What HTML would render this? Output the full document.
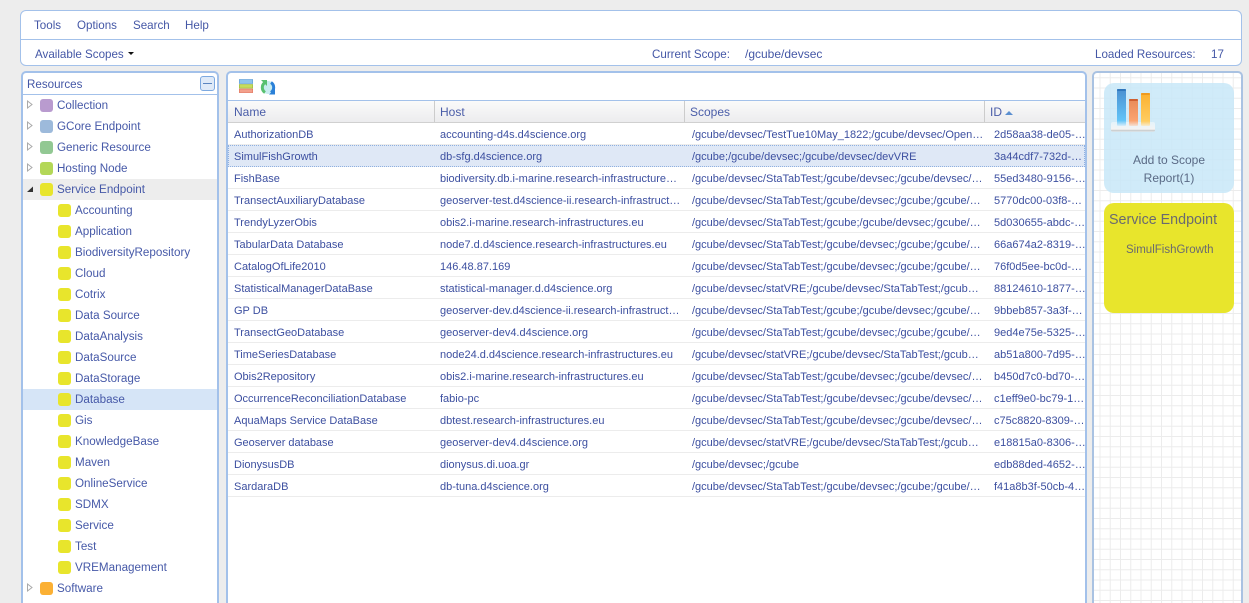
<!DOCTYPE html>
<html>
<head>
<meta charset="utf-8">
<style>
html,body{margin:0;padding:0;width:1249px;height:603px;overflow:hidden;background:#ededed;font-family:"Liberation Sans",sans-serif;color:#3f51a5}
div,span{position:absolute;box-sizing:border-box;white-space:nowrap}
.t{font-size:11.6px;line-height:14px;color:#4457a6}
.panel{background:#fff;border:1px solid #a3c1ea}
.node{left:23px;width:194px;height:21px}
.sw{width:13px;height:13px;border-radius:3px;top:4px;background:#e8e52c}
.lbl{font-size:11.65px;line-height:21px;top:0;color:#4659a8}
.tw{position:absolute;left:2px;top:4px;width:9px;height:11px}
.row{left:228px;width:857px;height:22px;border-bottom:1px solid #ececec}
.c{top:1px;line-height:22px;font-size:11px;color:#3c4fa0}
.c1{left:6px}.c2{left:212px}.c3{left:464px}.c4{left:766px}
.h{top:0;height:22px;line-height:23px;font-size:12px;color:#4a5da8}
</style>
</head>
<body>
<div style="left:0;top:0;width:1249px;height:603px;overflow:hidden">
<!-- top panel -->
<div class="panel" style="left:20px;top:10px;width:1222px;height:56px;border-radius:6px"></div>
<div style="left:21px;top:39px;width:1220px;height:1px;background:#a3c1ea"></div>
<div class="t" style="left:34px;top:19px">Tools</div>
<div class="t" style="left:77px;top:19px">Options</div>
<div class="t" style="left:133px;top:19px">Search</div>
<div class="t" style="left:185px;top:19px">Help</div>
<div class="t" style="left:35px;top:48px">Available Scopes</div>
<div style="left:128px;top:52px;width:0;height:0;border-top:3px solid #111;border-left:3px solid transparent;border-right:3px solid transparent"></div>
<div class="t" style="left:652px;top:48px">Current Scope:</div>
<div class="t" style="left:745px;top:47px;font-size:12px">/gcube/devsec</div>
<div class="t" style="left:1095px;top:48px">Loaded Resources:</div>
<div class="t" style="left:1211px;top:48px">17</div>

<!-- left panel -->
<div style="left:21px;top:71px;width:198px;height:560px;background:#fff;border:2px solid #a3c1ea;border-radius:5px 5px 0 0"></div>
<div style="left:23px;top:94px;width:194px;height:1px;background:#a3c1ea"></div>
<div class="t" style="left:27px;top:78px">Resources</div>
<div style="left:200px;top:76px;width:15px;height:15px;border:1px solid #7da9e0;border-radius:3px;background:#dfeaf8"></div>
<div style="left:203px;top:83px;width:9px;height:1px;background:#5b85c0"></div>

<div class="node" style="top:95px"><svg class="tw" viewBox="0 0 9 11"><path d="M2.500 2L7 5.500L2.500 9Z" fill="#fff" stroke="#aaa"/></svg><span class="sw" style="left:17px;background:#b99bcf"></span><span class="lbl" style="left:34px">Collection</span></div>
<div class="node" style="top:116px"><svg class="tw" viewBox="0 0 9 11"><path d="M2.500 2L7 5.500L2.500 9Z" fill="#fff" stroke="#aaa"/></svg><span class="sw" style="left:17px;background:#9dbadb"></span><span class="lbl" style="left:34px">GCore Endpoint</span></div>
<div class="node" style="top:137px"><svg class="tw" viewBox="0 0 9 11"><path d="M2.500 2L7 5.500L2.500 9Z" fill="#fff" stroke="#aaa"/></svg><span class="sw" style="left:17px;background:#92c893"></span><span class="lbl" style="left:34px">Generic Resource</span></div>
<div class="node" style="top:158px"><svg class="tw" viewBox="0 0 9 11"><path d="M2.500 2L7 5.500L2.500 9Z" fill="#fff" stroke="#aaa"/></svg><span class="sw" style="left:17px;background:#b3d757"></span><span class="lbl" style="left:34px">Hosting Node</span></div>
<div class="node" style="top:179px;background:#ededed"><svg class="tw" viewBox="0 0 9 11"><path d="M2 9L8 9L8 3.500Z" fill="#333"/></svg><span class="sw" style="left:17px"></span><span class="lbl" style="left:34px">Service Endpoint</span></div>
<div class="node" style="top:200px"><span class="sw" style="left:35px"></span><span class="lbl" style="left:52px">Accounting</span></div>
<div class="node" style="top:221px"><span class="sw" style="left:35px"></span><span class="lbl" style="left:52px">Application</span></div>
<div class="node" style="top:242px"><span class="sw" style="left:35px"></span><span class="lbl" style="left:52px">BiodiversityRepository</span></div>
<div class="node" style="top:263px"><span class="sw" style="left:35px"></span><span class="lbl" style="left:52px">Cloud</span></div>
<div class="node" style="top:284px"><span class="sw" style="left:35px"></span><span class="lbl" style="left:52px">Cotrix</span></div>
<div class="node" style="top:305px"><span class="sw" style="left:35px"></span><span class="lbl" style="left:52px">Data Source</span></div>
<div class="node" style="top:326px"><span class="sw" style="left:35px"></span><span class="lbl" style="left:52px">DataAnalysis</span></div>
<div class="node" style="top:347px"><span class="sw" style="left:35px"></span><span class="lbl" style="left:52px">DataSource</span></div>
<div class="node" style="top:368px"><span class="sw" style="left:35px"></span><span class="lbl" style="left:52px">DataStorage</span></div>
<div class="node" style="top:389px;background:#d6e5f7"><span class="sw" style="left:35px"></span><span class="lbl" style="left:52px">Database</span></div>
<div class="node" style="top:410px"><span class="sw" style="left:35px"></span><span class="lbl" style="left:52px">Gis</span></div>
<div class="node" style="top:431px"><span class="sw" style="left:35px"></span><span class="lbl" style="left:52px">KnowledgeBase</span></div>
<div class="node" style="top:452px"><span class="sw" style="left:35px"></span><span class="lbl" style="left:52px">Maven</span></div>
<div class="node" style="top:473px"><span class="sw" style="left:35px"></span><span class="lbl" style="left:52px">OnlineService</span></div>
<div class="node" style="top:494px"><span class="sw" style="left:35px"></span><span class="lbl" style="left:52px">SDMX</span></div>
<div class="node" style="top:515px"><span class="sw" style="left:35px"></span><span class="lbl" style="left:52px">Service</span></div>
<div class="node" style="top:536px"><span class="sw" style="left:35px"></span><span class="lbl" style="left:52px">Test</span></div>
<div class="node" style="top:557px"><span class="sw" style="left:35px"></span><span class="lbl" style="left:52px">VREManagement</span></div>
<div class="node" style="top:578px"><svg class="tw" viewBox="0 0 9 11"><path d="M2.500 2L7 5.500L2.500 9Z" fill="#fff" stroke="#aaa"/></svg><span class="sw" style="left:17px;background:#fbb034"></span><span class="lbl" style="left:34px">Software</span></div>

<!-- center panel -->
<div style="left:226px;top:71px;width:861px;height:560px;background:#fff;border:2px solid #a3c1ea;border-radius:5px 5px 0 0"></div>
<svg style="position:absolute;left:239px;top:79px" width="37" height="16" viewBox="0 0 37 16">
<rect x=".3" y=".5" width="13.400" height="4" fill="#8ec4ee" stroke="#5a9bd5" stroke-width=".6"/>
<rect x=".3" y="5.500" width="13.400" height="3.600" fill="#c5dc5e" stroke="#9ab83a" stroke-width=".6"/>
<rect x=".3" y="10" width="13.400" height="3.600" fill="#f3a08c" stroke="#e0745c" stroke-width=".6"/>
<circle cx="29" cy="8.500" r="6.500" fill="#c8ecf0"/>
<path d="M26 3.500A6 6 0 0 0 26 13.500" fill="none" stroke="#58c070" stroke-width="3"/>
<path d="M22 1h6v6z" fill="#58c070"/>
<path d="M32 13.500A6 6 0 0 0 32 3.500" fill="none" stroke="#2a80d8" stroke-width="3"/>
<path d="M30 15.500h6v-6z" fill="#2a80d8"/>
</svg>
<div style="left:228px;top:100px;width:857px;height:1px;background:#a3c1ea"></div>
<div style="left:228px;top:101px;width:857px;height:22px;background:linear-gradient(#fafafa,#ececee);border-bottom:1px solid #d0d0d0">
<span class="h" style="left:6px">Name</span>
<span class="h" style="left:212px">Host</span>
<span class="h" style="left:462px">Scopes</span>
<span class="h" style="left:762px">ID</span>
<span style="left:777px;top:10px;width:0;height:0;border-bottom:4px solid #5b8fd0;border-left:4px solid transparent;border-right:4px solid transparent"></span>
<span style="left:206px;top:0;width:1px;height:21px;background:#ccc"></span>
<span style="left:456px;top:0;width:1px;height:21px;background:#ccc"></span>
<span style="left:756px;top:0;width:1px;height:21px;background:#ccc"></span>
</div>

<div class="row" style="top:123px"><span class="c c1">AuthorizationDB</span><span class="c c2">accounting-d4s.d4science.org</span><span class="c c3">/gcube/devsec/TestTue10May_1822;/gcube/devsec/Open…</span><span class="c c4">2d58aa38-de05-…</span></div>
<div class="row" style="top:145px;background:#dfe8f6;border:1px dotted #8fb0e0"><span class="c c1" style="left:5px;top:0">SimulFishGrowth</span><span class="c c2" style="left:211px;top:0">db-sfg.d4science.org</span><span class="c c3" style="left:463px;top:0">/gcube;/gcube/devsec;/gcube/devsec/devVRE</span><span class="c c4" style="left:765px;top:0">3a44cdf7-732d-…</span></div>
<div class="row" style="top:167px"><span class="c c1">FishBase</span><span class="c c2">biodiversity.db.i-marine.research-infrastructure…</span><span class="c c3">/gcube/devsec/StaTabTest;/gcube/devsec;/gcube/devsec/…</span><span class="c c4">55ed3480-9156-…</span></div>
<div class="row" style="top:189px"><span class="c c1">TransectAuxiliaryDatabase</span><span class="c c2">geoserver-test.d4science-ii.research-infrastruct…</span><span class="c c3">/gcube/devsec/StaTabTest;/gcube/devsec;/gcube;/gcube/…</span><span class="c c4">5770dc00-03f8-…</span></div>
<div class="row" style="top:211px"><span class="c c1">TrendyLyzerObis</span><span class="c c2">obis2.i-marine.research-infrastructures.eu</span><span class="c c3">/gcube/devsec/StaTabTest;/gcube;/gcube/devsec;/gcube/…</span><span class="c c4">5d030655-abdc-…</span></div>
<div class="row" style="top:233px"><span class="c c1">TabularData Database</span><span class="c c2">node7.d.d4science.research-infrastructures.eu</span><span class="c c3">/gcube/devsec/StaTabTest;/gcube/devsec;/gcube;/gcube/…</span><span class="c c4">66a674a2-8319-…</span></div>
<div class="row" style="top:255px"><span class="c c1">CatalogOfLife2010</span><span class="c c2">146.48.87.169</span><span class="c c3">/gcube/devsec/StaTabTest;/gcube/devsec;/gcube;/gcube/…</span><span class="c c4">76f0d5ee-bc0d-…</span></div>
<div class="row" style="top:277px"><span class="c c1">StatisticalManagerDataBase</span><span class="c c2">statistical-manager.d.d4science.org</span><span class="c c3">/gcube/devsec/statVRE;/gcube/devsec/StaTabTest;/gcub…</span><span class="c c4">88124610-1877-…</span></div>
<div class="row" style="top:299px"><span class="c c1">GP DB</span><span class="c c2">geoserver-dev.d4science-ii.research-infrastruct…</span><span class="c c3">/gcube/devsec/StaTabTest;/gcube;/gcube/devsec;/gcube/…</span><span class="c c4">9bbeb857-3a3f-…</span></div>
<div class="row" style="top:321px"><span class="c c1">TransectGeoDatabase</span><span class="c c2">geoserver-dev4.d4science.org</span><span class="c c3">/gcube/devsec/StaTabTest;/gcube/devsec;/gcube;/gcube/…</span><span class="c c4">9ed4e75e-5325-…</span></div>
<div class="row" style="top:343px"><span class="c c1">TimeSeriesDatabase</span><span class="c c2">node24.d.d4science.research-infrastructures.eu</span><span class="c c3">/gcube/devsec/statVRE;/gcube/devsec/StaTabTest;/gcub…</span><span class="c c4">ab51a800-7d95-…</span></div>
<div class="row" style="top:365px"><span class="c c1">Obis2Repository</span><span class="c c2">obis2.i-marine.research-infrastructures.eu</span><span class="c c3">/gcube/devsec/StaTabTest;/gcube/devsec;/gcube/devsec/…</span><span class="c c4">b450d7c0-bd70-…</span></div>
<div class="row" style="top:387px"><span class="c c1">OccurrenceReconciliationDatabase</span><span class="c c2">fabio-pc</span><span class="c c3">/gcube/devsec/StaTabTest;/gcube/devsec;/gcube/devsec/…</span><span class="c c4">c1eff9e0-bc79-1…</span></div>
<div class="row" style="top:409px"><span class="c c1">AquaMaps Service DataBase</span><span class="c c2">dbtest.research-infrastructures.eu</span><span class="c c3">/gcube/devsec/StaTabTest;/gcube/devsec;/gcube/devsec/…</span><span class="c c4">c75c8820-8309-…</span></div>
<div class="row" style="top:431px"><span class="c c1">Geoserver database</span><span class="c c2">geoserver-dev4.d4science.org</span><span class="c c3">/gcube/devsec/statVRE;/gcube/devsec/StaTabTest;/gcub…</span><span class="c c4">e18815a0-8306-…</span></div>
<div class="row" style="top:453px"><span class="c c1">DionysusDB</span><span class="c c2">dionysus.di.uoa.gr</span><span class="c c3">/gcube/devsec;/gcube</span><span class="c c4">edb88ded-4652-…</span></div>
<div class="row" style="top:475px"><span class="c c1">SardaraDB</span><span class="c c2">db-tuna.d4science.org</span><span class="c c3">/gcube/devsec/StaTabTest;/gcube/devsec;/gcube;/gcube/…</span><span class="c c4">f41a8b3f-50cb-4…</span></div>

<!-- right panel -->
<div style="left:1092px;top:71px;width:151px;height:560px;border:2px solid #a9c2e2;border-radius:5px 5px 0 0;background-color:#fff;background-image:linear-gradient(#ececec 1px,transparent 1px),linear-gradient(90deg,#ececec 1px,transparent 1px);background-size:10.25px 10.25px;background-position:5.500px 4.250px"></div>
<div style="left:1104px;top:83px;width:130px;height:110px;background:rgba(200,232,248,.85);border-radius:10px"></div>
<svg style="position:absolute;left:1108px;top:86px" width="52" height="52" viewBox="0 0 52 52">
<defs>
<linearGradient id="a" x1="0" y1="0" x2="0" y2="1"><stop offset="0" stop-color="#4a8fd0"/><stop offset=".85" stop-color="#62c4f8"/><stop offset="1" stop-color="#d8eefa"/></linearGradient>
<linearGradient id="b" x1="0" y1="0" x2="0" y2="1"><stop offset="0" stop-color="#e88a58"/><stop offset=".8" stop-color="#fba470"/><stop offset="1" stop-color="#f5e2d6"/></linearGradient>
<linearGradient id="c" x1="0" y1="0" x2="0" y2="1"><stop offset="0" stop-color="#fbb030"/><stop offset=".85" stop-color="#ffcc60"/><stop offset="1" stop-color="#f8ecd0"/></linearGradient>
<linearGradient id="d" x1="0" y1="0" x2="0" y2="1"><stop offset="0" stop-color="#e4f3fb"/><stop offset=".75" stop-color="#f4f4f4"/><stop offset=".8" stop-color="#c8c8c8"/><stop offset="1" stop-color="#dde8ee"/></linearGradient>
</defs>
<rect x="3" y="36" width="44" height="10" rx="2" fill="url(#d)"/>
<rect x="9" y="3" width="9" height="37" rx="1" fill="url(#a)"/>
<rect x="9" y="3" width="9" height="2" rx="1" fill="#2f76bc"/>
<rect x="21" y="13" width="9" height="27" rx="1" fill="url(#b)"/>
<rect x="21" y="13" width="9" height="2" rx="1" fill="#cf5f30"/>
<rect x="33" y="7" width="9" height="33" rx="1" fill="url(#c)"/>
<rect x="33" y="7" width="9" height="2" rx="1" fill="#ee9a20"/>
</svg>
<div style="left:1104px;top:153px;width:130px;text-align:center;font-size:12px;line-height:14px;color:#5a6a85">Add to Scope</div>
<div style="left:1104px;top:171px;width:130px;text-align:center;font-size:12px;line-height:14px;color:#5a6a85">Report(1)</div>
<div style="left:1104px;top:203px;width:130px;height:110px;background:#e8e52c;border-radius:10px"></div>
<div style="left:1109px;top:212px;font-size:14.300px;line-height:16px;color:#6a6a70">Service Endpoint</div>
<div style="left:1126px;top:243px;font-size:11.500px;line-height:14px;color:#6a6a70">SimulFishGrowth</div>
</div>
</body>
</html>
